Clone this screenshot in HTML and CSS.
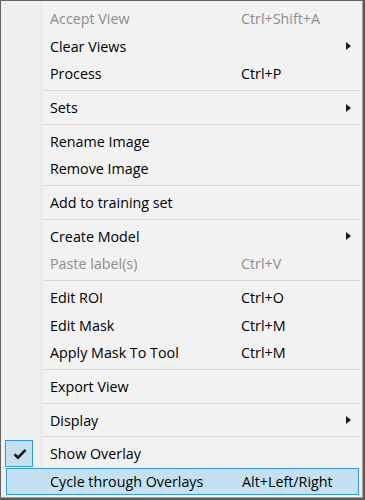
FILE: index.html
```html
<!DOCTYPE html>
<html>
<head>
<meta charset="utf-8">
<link rel="stylesheet" href="styles.css">
</head>
<body>
<div class="menu">
  <div class="item disabled"><span></span><span class="label">Accept View</span><span class="key">Ctrl+Shift+A</span><span></span></div>
  <div class="item"><span></span><span class="label">Clear Views</span><span class="key"></span><span class="arrow"><svg width="5" height="8" viewBox="0 0 5 8"><path d="M0 0L5 4L0 8Z" fill="#1a1a1a"/></svg></span></div>
  <div class="item"><span></span><span class="label">Process</span><span class="key">Ctrl+P</span><span></span></div>
  <div class="sep"></div>
  <div class="item"><span></span><span class="label">Sets</span><span class="key"></span><span class="arrow"><svg width="5" height="8" viewBox="0 0 5 8"><path d="M0 0L5 4L0 8Z" fill="#1a1a1a"/></svg></span></div>
  <div class="sep"></div>
  <div class="item"><span></span><span class="label">Rename Image</span><span class="key"></span><span></span></div>
  <div class="item"><span></span><span class="label">Remove Image</span><span class="key"></span><span></span></div>
  <div class="sep"></div>
  <div class="item"><span></span><span class="label">Add to training set</span><span class="key"></span><span></span></div>
  <div class="sep"></div>
  <div class="item"><span></span><span class="label">Create Model</span><span class="key"></span><span class="arrow"><svg width="5" height="8" viewBox="0 0 5 8"><path d="M0 0L5 4L0 8Z" fill="#1a1a1a"/></svg></span></div>
  <div class="item disabled"><span></span><span class="label">Paste label(s)</span><span class="key">Ctrl+V</span><span></span></div>
  <div class="sep"></div>
  <div class="item"><span></span><span class="label">Edit ROI</span><span class="key">Ctrl+O</span><span></span></div>
  <div class="item"><span></span><span class="label">Edit Mask</span><span class="key">Ctrl+M</span><span></span></div>
  <div class="item"><span></span><span class="label">Apply Mask To Tool</span><span class="key">Ctrl+M</span><span></span></div>
  <div class="sep"></div>
  <div class="item"><span></span><span class="label">Export View</span><span class="key"></span><span></span></div>
  <div class="sep"></div>
  <div class="item"><span></span><span class="label">Display</span><span class="key"></span><span class="arrow"><svg width="5" height="8" viewBox="0 0 5 8"><path d="M0 0L5 4L0 8Z" fill="#1a1a1a"/></svg></span></div>
  <div class="sep"></div>
  <div class="item"><span class="check"><svg width="14" height="12" viewBox="0 0 14 12"><path d="M1.5 6.2L5 9.6L12.5 1.8" fill="none" stroke="#1a1a1a" stroke-width="2.6"/></svg></span><span class="label">Show Overlay</span><span class="key"></span><span></span></div>
  <div class="item hot"><span></span><span class="label">Cycle through Overlays</span><span class="key">Alt+Left/Right</span><span></span></div>
</div>
</body>
</html>
```
FILE: styles.css
```css
html, body {
  margin: 0;
  padding: 0;
  background: #5a5a5a;
}
.menu {
  box-sizing: border-box;
  width: 363px;
  height: 498px;
  border-left: 1px solid #646464;
  border-top: 1px solid #646464;
  border-right: 1px solid #a0a0a0;
  border-bottom: 1px solid #a0a0a0;
  padding: 4px 0 2px 0;
  display: flex;
  flex-direction: column;
  background: linear-gradient(to right, #f0f0f0 0, #f0f0f0 40px, #e2e2e2 40px, #e2e2e2 41px, #f2f2f2 41px);
  font-family: "Open Sans", "Noto Sans", sans-serif;
  font-size: 14.3px;
  color: #000;
}
.item {
  box-sizing: border-box;
  height: 27.5px;
  flex: none;
  margin: 0 3px 0 4px;
  display: grid;
  grid-template-columns: 45px 191px 1fr 14px;
  align-items: center;
  white-space: nowrap;
}
.item.disabled {
  color: #8c8c8c;
}
.item.hot {
  margin-left: 5px;
  grid-template-columns: 44px 191px 1fr 14px;
  background: #c5e1f1;
  border: 1px solid #3399dd;
}
.item.hot .label {
  margin-left: -1px;
}
.label, .key {
  line-height: 20px;
  padding-top: 1px;
}
.arrow {
  display: flex;
  align-items: center;
  padding-left: 1px;
}
.arrow svg {
  display: block;
}
.check {
  box-sizing: border-box;
  width: 28px;
  height: 27px;
  align-self: start;
  background: #c5e1f1;
  border: 1px solid #3399dd;
  display: flex;
  align-items: center;
  justify-content: center;
  padding-left: 1px;
}
.check svg {
  display: block;
}
.sep {
  flex: none;
  height: 6.25px;
  margin: 0 2px 0 43px;
  display: flex;
  align-items: center;
}
.sep::before {
  content: "";
  display: block;
  width: 100%;
  height: 1px;
  background: #d7d7d7;
}
```
